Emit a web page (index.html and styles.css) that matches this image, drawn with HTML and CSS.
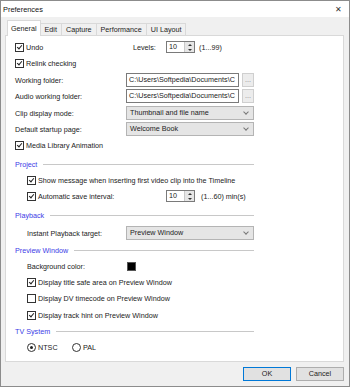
FILE: index.html
```html
<!DOCTYPE html>
<html>
<head>
    <title>Preferences</title>
    <link rel="stylesheet" href="styles.css">
</head>
<body>
<div class="window">
    <div class="titlebar">
        <span class="title">Preferences</span>
        <span class="close">&#x2715;</span>
    </div>

    <div class="tabs">
        <div class="tab active">General</div>
        <div class="tab">Edit</div>
        <div class="tab">Capture</div>
        <div class="tab">Performance</div>
        <div class="tab">UI Layout</div>
    </div>

    <div class="panel">
        <div class="row">
            <div class="cell w-undo"><span class="chk on"></span>Undo</div>
            <div class="cell w-levels">Levels:</div>
            <div class="spin"><span class="spin-val">10</span><span class="spin-btn"><i class="up"></i><i class="down"></i></span></div>
            <span class="hint">(1...99)</span>
        </div>
        <div class="row">
            <div class="cell"><span class="chk on"></span>Relink checking</div>
        </div>
        <div class="row gap1">
            <div class="cell w-label">Working folder:</div>
            <div class="textbox">C:\Users\Softpedia\Documents\C</div>
            <div class="dots">...</div>
        </div>
        <div class="row">
            <div class="cell w-label">Audio working folder:</div>
            <div class="textbox">C:\Users\Softpedia\Documents\C</div>
            <div class="dots">...</div>
        </div>
        <div class="row gap1">
            <div class="cell w-label">Clip display mode:</div>
            <div class="combo">Thumbnail and file name<span class="chev"></span></div>
        </div>
        <div class="row">
            <div class="cell w-label">Default startup page:</div>
            <div class="combo">Welcome Book<span class="chev"></span></div>
        </div>
        <div class="row">
            <div class="cell"><span class="chk on"></span>Media Library Animation</div>
        </div>

        <!-- Project -->
        <div class="row section">
            <span class="sec-title">Project</span><span class="sec-line"></span>
        </div>
        <div class="row indent">
            <div class="cell"><span class="chk on"></span>Show message when inserting first video clip into the Timeline</div>
        </div>
        <div class="row indent">
            <div class="cell w-auto"><span class="chk on"></span>Automatic save interval:</div>
            <div class="spin"><span class="spin-val">10</span><span class="spin-btn"><i class="up"></i><i class="down"></i></span></div>
            <span class="hint wide">(1...60) min(s)</span>
        </div>

        <!-- Playback -->
        <div class="row section">
            <span class="sec-title">Playback</span><span class="sec-line"></span>
        </div>
        <div class="row indent gap2">
            <div class="cell w-sublabel">Instant Playback target:</div>
            <div class="combo">Preview Window<span class="chev"></span></div>
        </div>

        <!-- Preview Window -->
        <div class="row section tight">
            <span class="sec-title">Preview Window</span><span class="sec-line"></span>
        </div>
        <div class="row indent">
            <div class="cell w-sublabel">Background color:</div>
            <span class="swatch"></span>
        </div>
        <div class="row indent">
            <div class="cell"><span class="chk on"></span>Display title safe area on Preview Window</div>
        </div>
        <div class="row indent">
            <div class="cell"><span class="chk"></span>Display DV timecode on Preview Window</div>
        </div>
        <div class="row indent gap1">
            <div class="cell"><span class="chk on"></span>Display track hint on Preview Window</div>
        </div>

        <!-- TV System -->
        <div class="row section flat">
            <span class="sec-title">TV System</span><span class="sec-line"></span>
        </div>
        <div class="row indent">
            <div class="cell w-radio"><span class="radio on"></span>NTSC</div>
            <div class="cell"><span class="radio"></span>PAL</div>
        </div>
    </div>

    <div class="buttons">
        <div class="btn default">OK</div>
        <div class="btn">Cancel</div>
    </div>
</div>
</body>
</html>
```

FILE: styles.css
```css
body {
    margin: 0;
    padding: 0;
    font-family: "Liberation Sans", Arial, sans-serif;
    font-size: 7.2px;
    color: #222;
    background-color: #fff;
}
.window {
    width: 350px;
    height: 387px;
    box-sizing: border-box;
    border: 1px solid #8c8c8c;
    background-color: #f0f0f0;
    display: flex;
    flex-direction: column;
}

/* Заголовок окна */
.titlebar {
    height: 16px;
    background-color: #fff;
    display: flex;
    align-items: center;
    justify-content: space-between;
    padding: 0 7px 0 2px;
}
.title {
    font-size: 7.4px;
    color: #111;
}
.close {
    font-size: 8px;
    color: #333;
}

/* Вкладки */
.tabs {
    height: 18px;
    display: flex;
    align-items: flex-end;
    padding-left: 6px;
}
.tab {
    height: 11px;
    line-height: 11px;
    padding: 0 4px;
    border: 1px solid #d9d9d9;
    border-bottom: none;
    border-left: none;
    background-color: #f0f0f0;
}
.tab.active {
    height: 15px;
    line-height: 15px;
    padding: 0 3px;
    border-left: 1px solid #d9d9d9;
    background-color: #fff;
    margin-bottom: -1px;
    position: relative;
    z-index: 1;
}

/* Панель вкладки */
.panel {
    height: 327px;
    box-sizing: border-box;
    margin: 0 5px 0 4px;
    border: 1px solid #d9d9d9;
    background-color: #fff;
    padding: 3px 0 0 9px;
}
.row {
    display: flex;
    align-items: center;
    height: 16px;
}
.gap1 { margin-top: 1px; }
.gap2 { margin-top: 2px; }
.indent { padding-left: 12px; }
.cell {
    display: flex;
    align-items: center;
    white-space: nowrap;
}
.w-undo { width: 118px; }
.w-levels { width: 33px; }
.w-label { width: 111px; }
.w-sublabel { width: 99px; }
.w-auto { width: 139px; }
.w-radio { width: 45px; }

.chk {
    width: 7px;
    height: 7px;
    border: 1px solid #333;
    background-color: #fff;
    margin-right: 2px;
    position: relative;
}
.chk.on::after {
    content: "";
    position: absolute;
    left: 2px;
    top: 0;
    width: 2px;
    height: 4px;
    border: solid #222;
    border-width: 0 1px 1px 0;
    transform: rotate(40deg);
}
.radio {
    width: 7px;
    height: 7px;
    border: 1px solid #333;
    border-radius: 50%;
    margin-right: 2px;
    position: relative;
}
.radio.on::after {
    content: "";
    position: absolute;
    left: 2px;
    top: 2px;
    width: 3px;
    height: 3px;
    border-radius: 50%;
    background-color: #222;
}

/* Поля ввода */
.spin {
    width: 29px;
    height: 12px;
    box-sizing: border-box;
    border: 1px solid #7a7a7a;
    display: flex;
    background-color: #fff;
}
.spin-val {
    flex-grow: 1;
    padding-left: 2px;
    line-height: 10px;
}
.spin-btn {
    width: 9px;
    border-left: 1px solid #c8c8c8;
    background-color: #e6e6e6;
    display: flex;
    flex-direction: column;
    align-items: center;
    justify-content: space-around;
}
.spin-btn i {
    width: 0;
    height: 0;
    border-left: 2px solid transparent;
    border-right: 2px solid transparent;
}
.spin-btn .up { border-bottom: 2px solid #333; }
.spin-btn .down { border-top: 2px solid #333; }
.hint {
    margin-left: 4px;
}
.hint.wide {
    margin-left: 6px;
}
.textbox {
    width: 113px;
    height: 14px;
    box-sizing: border-box;
    border: 1px solid #7a7a7a;
    padding-left: 2px;
    line-height: 12px;
    overflow: hidden;
    white-space: nowrap;
}
.dots {
    width: 12px;
    height: 14px;
    box-sizing: border-box;
    margin-left: 3px;
    border: 1px solid #cfcfcf;
    background-color: #ececec;
    color: #888;
    text-align: center;
    line-height: 12px;
}
.combo {
    width: 128px;
    height: 14px;
    box-sizing: border-box;
    border: 1px solid #b4b4b4;
    background-color: #e5e5e5;
    padding-left: 3px;
    line-height: 12px;
    display: flex;
    justify-content: space-between;
    align-items: center;
}
.chev {
    width: 3px;
    height: 3px;
    border: solid #777;
    border-width: 0 1px 1px 0;
    transform: rotate(45deg);
    margin: -2px 5px 0 0;
}
.swatch {
    width: 7px;
    height: 7px;
    border: 1px solid #555;
    background-color: #000;
    margin-left: 1px;
}

/* Заголовки групп */
.section {
    width: 239px;
    margin-top: 3px;
}
.section.tight { margin-top: 1px; }
.section.flat { margin-top: 0; }
.sec-title {
    color: #3b3be6;
    white-space: nowrap;
}
.sec-line {
    flex-grow: 1;
    height: 1px;
    background-color: #c8c8c8;
    margin-left: 6px;
}

/* Кнопки */
.buttons {
    display: flex;
    justify-content: flex-end;
    gap: 5px;
    padding: 5px 5px 0 0;
}
.btn {
    width: 48px;
    height: 14px;
    box-sizing: border-box;
    border: 1px solid #adadad;
    background-color: #e1e1e1;
    text-align: center;
    line-height: 12px;
}
.btn.default {
    border-color: #0078d7;
}
```
